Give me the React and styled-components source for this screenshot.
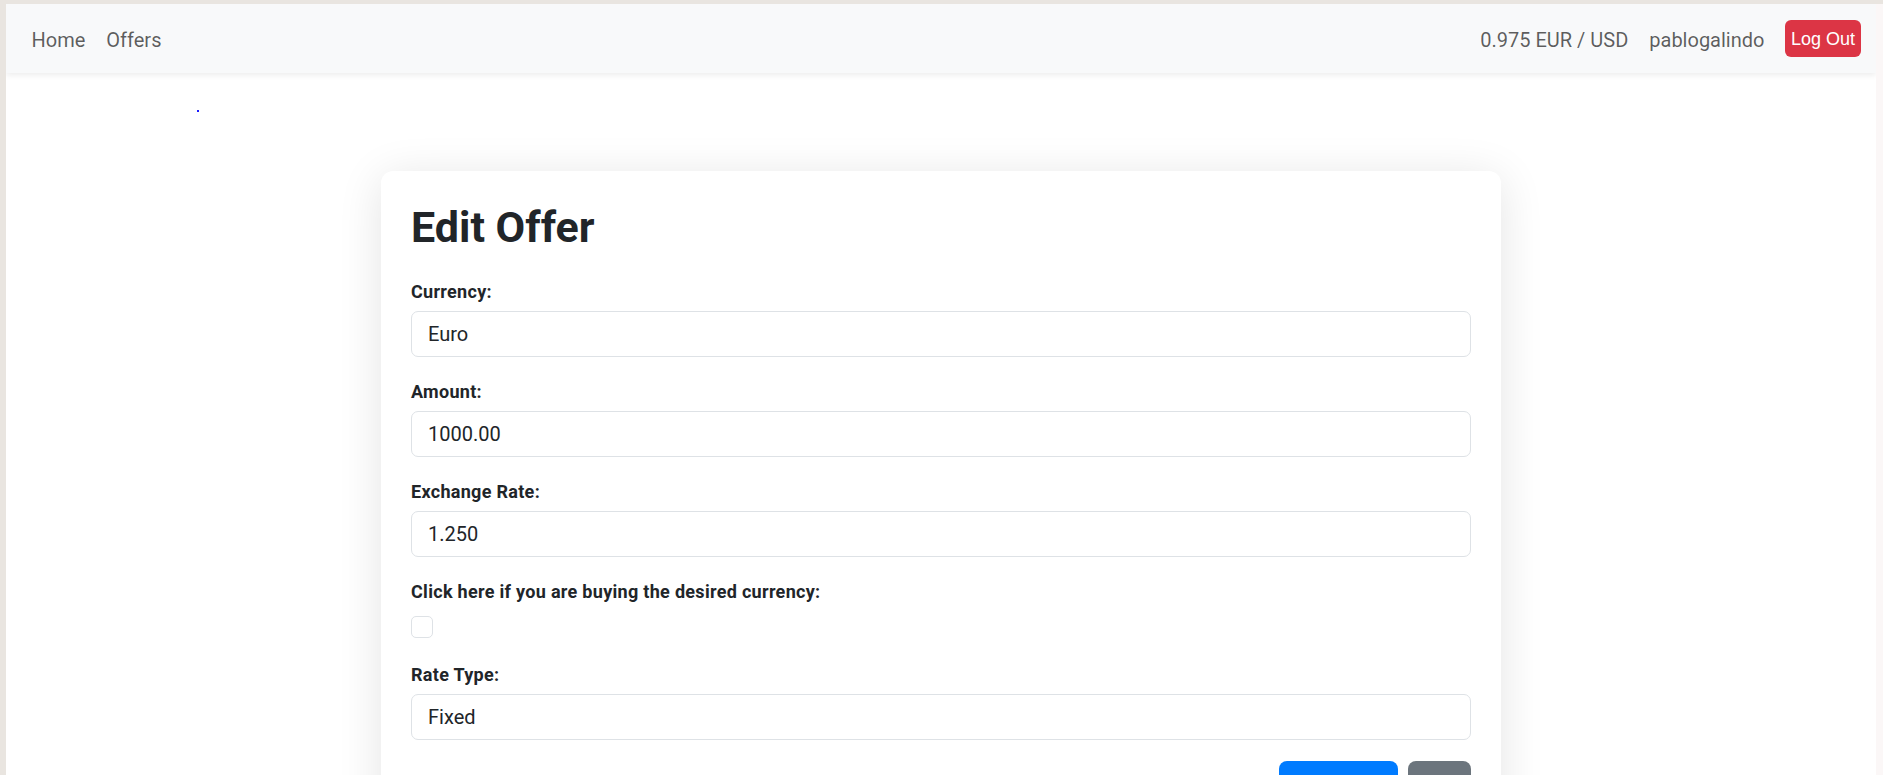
import React from 'react';
import styled, { createGlobalStyle } from 'styled-components';

const GlobalStyle = createGlobalStyle`
  html, body {
    margin: 0;
    padding: 0;
    background: #e9e5e0;
    font-family: Roboto, "Noto Sans", sans-serif;
    color: #212529;
    overflow: hidden;
  }
  * { box-sizing: border-box; }
`;

const Frame = styled.div`
  display: flex;
  padding: 4px 0 0 6px;
  height: 775px;
  overflow: hidden;
`;
const Window = styled.div`
  width: 1870px;
  background: #fff;
  display: flex;
  flex-direction: column;
  overflow: hidden;
`;
const RightStrip = styled.div`
  flex: 1;
  background: #fbf7f7;
`;

const Navbar = styled.nav`
  flex-shrink: 0;
  height: 69px;
  display: flex;
  align-items: center;
  justify-content: space-between;
  padding: 0 15px;
  background: #f8f9fa;
  box-shadow: 0 2px 6px rgba(0, 0, 0, 0.08);
  position: relative;
  z-index: 1;
`;
const NavGroup = styled.div`
  display: flex;
  align-items: center;
`;
const NavLink = styled.a`
  font-size: 20px;
  line-height: 30px;
  padding: 3px 10.5px 0;
  color: rgba(0, 0, 0, 0.64);
  text-decoration: none;
  cursor: pointer;
`;
const LogOut = styled.button`
  margin-left: 10px;
  font-family: "Liberation Sans", Arial, sans-serif;
  font-size: 18px;
  padding: 9px 6px 7px;
  color: #fff;
  background: #dc3545;
  border: none;
  border-radius: 6px;
`;

const Main = styled.main`
  flex-shrink: 0;
  padding-top: 37px;
`;
const Dot = styled.span`
  display: block;
  width: 2px;
  height: 2px;
  margin-left: 191px;
  background: #1a1aff;
`;

const Card = styled.div`
  width: 1120px;
  margin: 59px auto 0;
  padding: 30px 30px 40px;
  background: #fff;
  border-radius: 12px;
  box-shadow: 0 6px 45px rgba(0, 0, 0, 0.11);
`;
const Title = styled.h2`
  margin: 0 0 27px;
  font-size: 43px;
  line-height: 52px;
  font-weight: 700;
  color: #212529;
`;
const Field = styled.div`
  margin-bottom: ${p => (p.$check ? '25px' : '23px')};
`;
const Label = styled.label`
  display: block;
  font-size: 18px;
  letter-spacing: 0.3px;
  font-weight: 700;
  line-height: 24px;
  margin-bottom: 7px;
`;
const Input = styled.input`
  display: block;
  width: 100%;
  height: 46px;
  padding: 0 16px;
  font-family: Roboto, sans-serif;
  font-size: 20px;
  color: #212529;
  background: #fff;
  border: 1px solid #dee2e6;
  border-radius: 7px;
  outline: none;
`;
const Check = styled.span`
  display: block;
  width: 22px;
  height: 22px;
  margin-top: 12px;
  border: 1px solid #dee2e6;
  border-radius: 5px;
  background: #fff;
`;
const Actions = styled.div`
  display: flex;
  justify-content: flex-end;
  gap: 10px;
  margin-top: -2px;
`;
const Button = styled.button`
  font-family: Roboto, sans-serif;
  font-size: 15px;
  padding: ${p => (p.$variant === 'secondary' ? '12px 15px' : '12px 12.5px')};
  color: #fff;
  border: none;
  border-radius: 8px;
  background: ${p => (p.$variant === 'secondary' ? '#6c757d' : '#007bff')};
`;

const fields = [
  { label: 'Currency:', value: 'Euro' },
  { label: 'Amount:', value: '1000.00' },
  { label: 'Exchange Rate:', value: '1.250' },
];

const App = () => (
  <>
    <GlobalStyle />
    <Frame>
      <Window>
        <Navbar>
          <NavGroup>
            <NavLink>Home</NavLink>
            <NavLink>Offers</NavLink>
          </NavGroup>
          <NavGroup>
            <NavLink>0.975 EUR / USD</NavLink>
            <NavLink>pablogalindo</NavLink>
            <LogOut>Log Out</LogOut>
          </NavGroup>
        </Navbar>
        <Main>
          <Dot />
          <Card>
            <Title>Edit Offer</Title>
            {fields.map(f => (
              <Field key={f.label}>
                <Label>{f.label}</Label>
                <Input readOnly value={f.value} />
              </Field>
            ))}
            <Field $check>
              <Label>Click here if you are buying the desired currency:</Label>
              <Check />
            </Field>
            <Field>
              <Label>Rate Type:</Label>
              <Input readOnly value="Fixed" />
            </Field>
            <Actions>
              <Button>Save Changes</Button>
              <Button $variant="secondary">Back</Button>
            </Actions>
          </Card>
        </Main>
      </Window>
      <RightStrip />
    </Frame>
  </>
);

export default App;
